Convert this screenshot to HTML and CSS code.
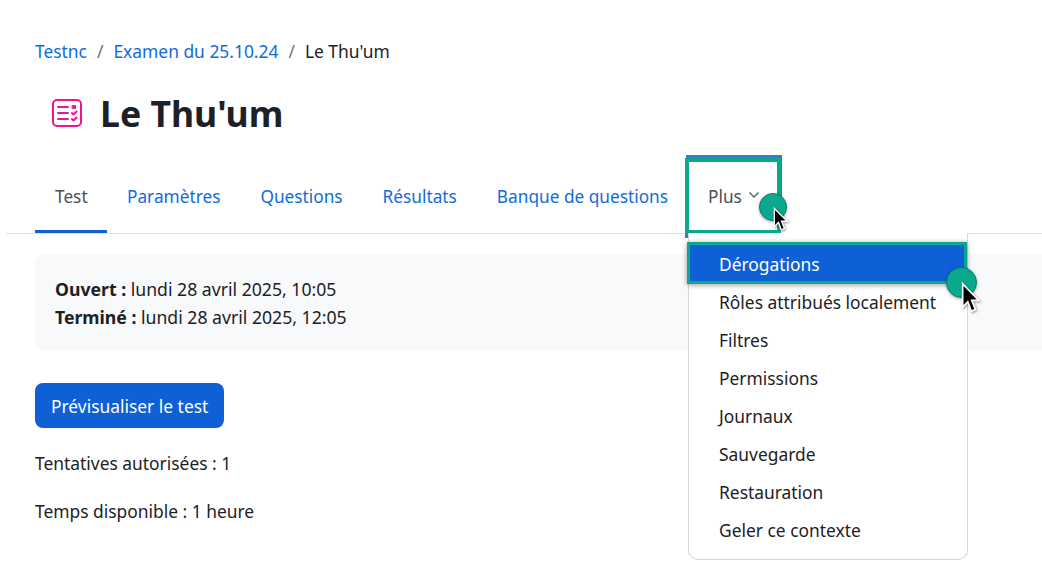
FILE: index.html
```html
<!DOCTYPE html>
<html lang="fr">

<head>
    <meta charset="UTF-8">
    <meta name="viewport" content="width=device-width, initial-scale=1.0">
    <title>Le Thu'um</title>
    <link rel="stylesheet" href="styles.css">
</head>

<body>
    <header class="page-header">
        <nav class="breadcrumb">
            <a href="#">Testnc</a>
            <span class="sep">/</span>
            <a href="#">Examen du 25.10.24</a>
            <span class="sep">/</span>
            <span>Le Thu'um</span>
        </nav>
        <div class="title-row">
            <svg class="quiz-icon" viewBox="0 0 32 30" width="32" height="30" fill="none" stroke="#f0158f" stroke-width="2" stroke-linecap="round" stroke-linejoin="round">
                <rect x="2" y="2" width="28" height="26" rx="4" />
                <path d="M7 9h10M7 15h10M7 21h10" />
                <rect x="21.5" y="7.5" width="3" height="3" fill="#f0158f" stroke-width="1" />
                <path d="M21 15l1.5 1.5 3-3M21 21l1.5 1.5 3-3" />
            </svg>
            <h1>Le Thu'um</h1>
        </div>
    </header>

    <nav class="tabs">
        <a class="tab active" href="#">Test</a>
        <a class="tab" href="#">Paramètres</a>
        <a class="tab" href="#">Questions</a>
        <a class="tab" href="#">Résultats</a>
        <a class="tab" href="#">Banque de questions</a>
        <div class="tab-more">
            <span class="tab more-label">Plus
                <svg class="chevron" viewBox="0 0 12 8" width="12" height="8" fill="none" stroke="#5f6770" stroke-width="1.5">
                    <path d="M1.5 1.5L6 6l4.5-4.5" />
                </svg>
            </span>

            <!-- annotation on the tab -->
            <div class="mark-more"></div>
            <div class="dot dot-more"></div>
            <svg class="pointer pointer-more" viewBox="0 0 18 26" width="16" height="25" preserveAspectRatio="none">
                <path d="M1.5 1.5v19l4.6-4.3 3.2 7.6 3.6-1.5-3.2-7.4h6.3z" fill="#000" stroke="#fff" stroke-width="1.5" />
            </svg>

            <ul class="menu">
                <li class="menu-item selected">Dérogations
                    <div class="dot dot-item"></div>
                    <svg class="pointer pointer-item" viewBox="0 0 18 26" width="20" height="32" preserveAspectRatio="none">
                        <path d="M1.5 1.5v19l4.6-4.3 3.2 7.6 3.6-1.5-3.2-7.4h6.3z" fill="#000" stroke="#fff" stroke-width="1.5" />
                    </svg>
                </li>
                <li class="menu-item">Rôles attribués localement</li>
                <li class="menu-item">Filtres</li>
                <li class="menu-item">Permissions</li>
                <li class="menu-item">Journaux</li>
                <li class="menu-item">Sauvegarde</li>
                <li class="menu-item">Restauration</li>
                <li class="menu-item">Geler ce contexte</li>
            </ul>
        </div>
    </nav>

    <main class="content">
        <div class="dates">
            <div><strong>Ouvert :</strong> lundi 28 avril 2025, 10:05</div>
            <div><strong>Terminé :</strong> lundi 28 avril 2025, 12:05</div>
        </div>
        <button class="btn-preview">Prévisualiser le test</button>
        <p class="info">Tentatives autorisées : 1</p>
        <p class="info">Temps disponible : 1 heure</p>
    </main>
</body>

</html>
```

FILE: styles.css
```css
body {
    margin: 0;
    min-height: 100vh;
    background: #fff;
    color: #1d2125;
    font-family: "Noto Sans", "Open Sans", sans-serif;
    font-size: 17.4px;
    line-height: 28px;
}

a {
    color: #0f6cdb;
    text-decoration: none;
}

.page-header {
    padding: 37px 0 0 35px;
}

.breadcrumb {
    display: flex;
    gap: 10px;
}

.sep {
    color: #6a737b;
}

.title-row {
    display: flex;
    align-items: center;
    gap: 17px;
    margin: 26px 0 0 16px;
    height: 44px;
}

.quiz-icon {
    flex: none;
}

h1 {
    margin: 0;
    font-size: 35.6px;
    line-height: 44px;
    font-weight: 700;
}

/* Tabs */
.tabs {
    display: flex;
    margin: 23px 0 0 6px;
    padding-left: 29px;
    height: 75px;
    border-bottom: 1px solid #dee2e6;
    font-size: 17.25px;
}

.tab {
    display: flex;
    align-items: center;
    gap: 6px;
    height: 75px;
    padding: 2px 20px 0;
    box-sizing: border-box;
}

.tab.active {
    width: 72px;
    color: #495057;
    border-bottom: 3px solid #0f5fd6;
    padding-top: 5px;
}

.tab-more {
    position: relative;
}

.more-label {
    color: #495057;
}

.chevron {
    margin-bottom: 3px;
}

.mark-more {
    position: absolute;
    left: -3px;
    top: 0;
    width: 96px;
    height: 76px;
    box-sizing: border-box;
    border: 4px solid #0aa88c;
    box-shadow: 1px -3px 0 #3f78c9;
}

.mark-more::after {
    content: "";
    position: absolute;
    left: -4px;
    bottom: -8px;
    width: 5px;
    height: 4px;
    background: #3f78c9;
}

.dot {
    position: absolute;
    border-radius: 50%;
    background: #0aa88c;
    border: 1px solid #0b7f6b;
    box-sizing: border-box;
    box-shadow: 0 1px 3px rgba(0, 0, 0, 0.35);
}

.dot-more {
    left: 71px;
    top: 35px;
    width: 28px;
    height: 28px;
}

.dot-item {
    left: 256px;
    top: 22px;
    width: 31px;
    height: 31px;
}

.pointer {
    position: absolute;
    z-index: 3;
    filter: drop-shadow(1px 1px 1px rgba(0, 0, 0, 0.4));
}

.pointer-more {
    left: 85px;
    top: 49px;
}

.pointer-item {
    left: 271px;
    top: 37px;
}

/* Dropdown */
.menu {
    position: absolute;
    left: 0;
    top: 75px;
    width: 280px;
    height: 327px;
    box-sizing: border-box;
    margin: 0;
    padding: 12px 0 0;
    list-style: none;
    background: #fff;
    border: 1px solid #d5d7da;
    border-top: 0;
    border-radius: 0 0 10px 10px;
    z-index: 2;
    font-size: 17.4px;
}

.menu-item {
    height: 38px;
    line-height: 38px;
    padding-left: 30px;
}

.menu-item.selected {
    position: relative;
    margin: -3px 0 -1px -2px;
    width: 280px;
    height: 42px;
    box-sizing: border-box;
    padding-left: 29px;
    line-height: 38px;
    color: #fff;
    background: #0f5fd6;
    border: 3px solid #0aa88c;
    box-shadow: 0 1px 5px rgba(0, 0, 0, 0.4);
}

/* Main */
.content {
    padding: 20px 0 0 35px;
}

.dates {
    box-sizing: border-box;
    height: 96px;
    padding: 21px 20px;
    background: #f8f9fa;
    border-radius: 10px 0 0 10px;
    font-size: 17.65px;
}

.btn-preview {
    display: block;
    height: 45px;
    margin: 33px 0 21px;
    padding: 0 16px;
    font: inherit;
    color: #fff;
    background: #0f5fd6;
    border: 0;
    border-radius: 8px;
}

.info {
    margin: 0 0 20px;
}
```
